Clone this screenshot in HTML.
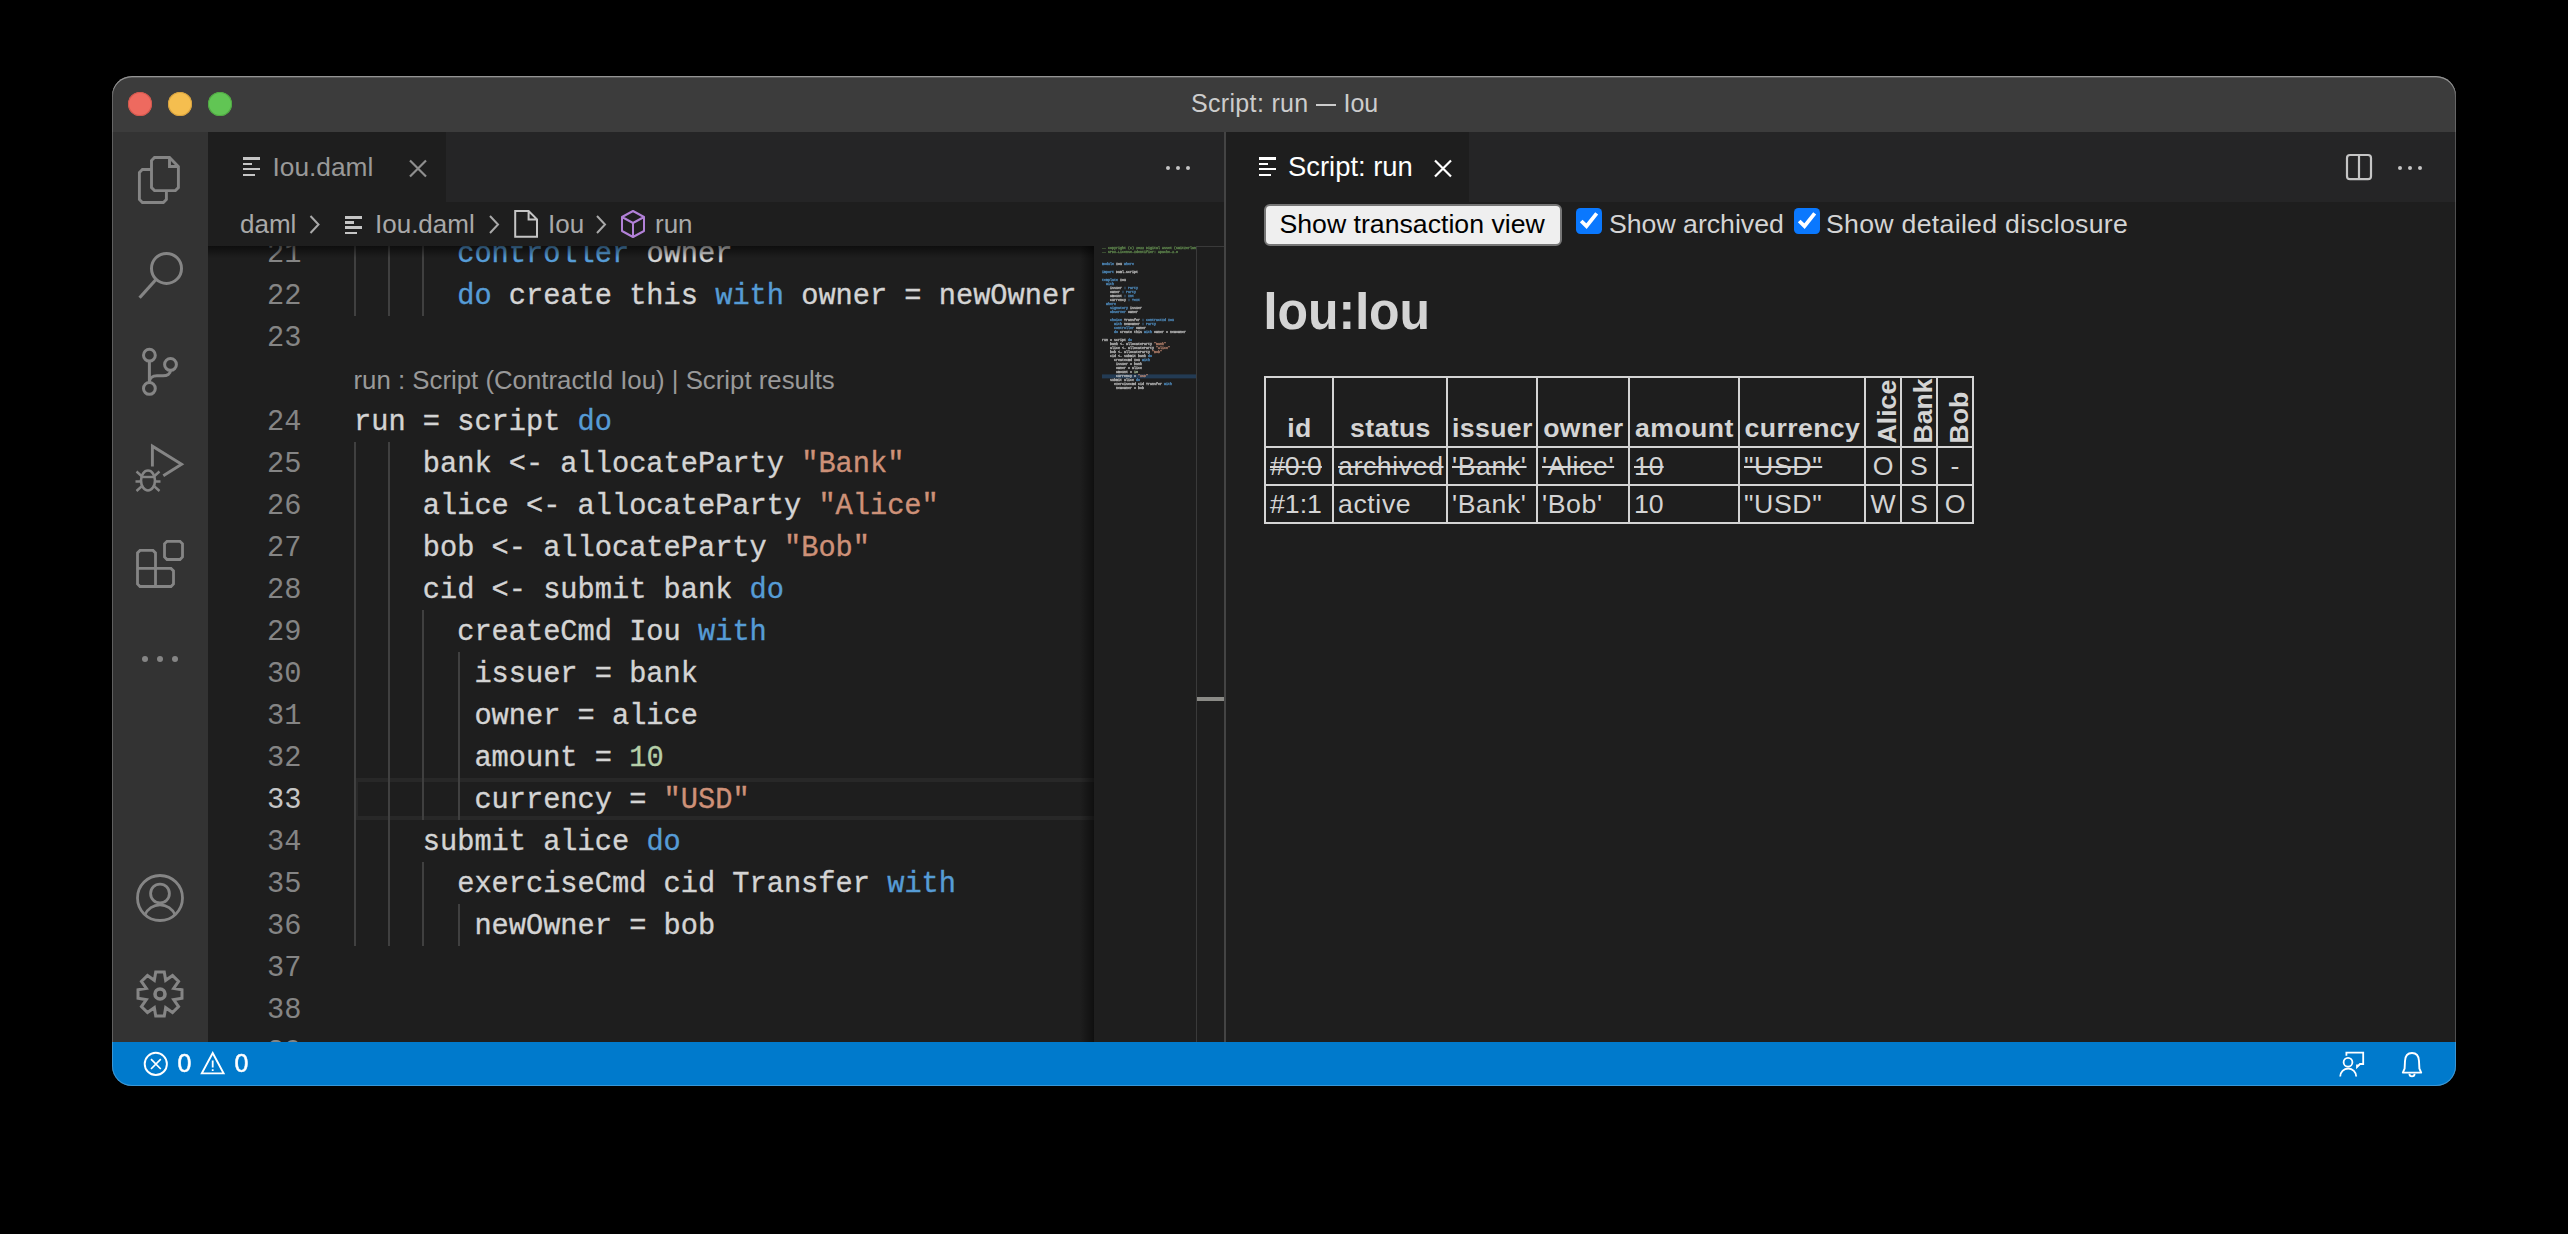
<!DOCTYPE html>
<html><head><meta charset="utf-8"><title>Script: run — Iou</title>
<style>
html,body{margin:0;padding:0;}
body{width:2568px;height:1234px;background:#000;position:relative;overflow:hidden;font-family:"Liberation Sans", sans-serif;}
.a{position:absolute;}
.t{position:absolute;white-space:pre;line-height:1;}
svg{position:absolute;overflow:visible;}
</style></head><body>

<div class="a" style="left:112px;top:76px;width:2344px;height:1010px;border-radius:20px;overflow:hidden;background:#3c3c3c;">
<div class="a" style="left:-112px;top:-76px;width:2568px;height:1234px;">
<div class="a" style="left:112px;top:76px;width:2344px;height:56px;background:#3c3c3c;"></div>
<div class="a" style="left:128px;top:92px;width:24px;height:24px;border-radius:50%;background:#ee6a5f;box-shadow:inset 0 0 0 1px #d2574d;"></div>
<div class="a" style="left:168px;top:92px;width:24px;height:24px;border-radius:50%;background:#f5be4f;box-shadow:inset 0 0 0 1px #d7a13e;"></div>
<div class="a" style="left:208px;top:92px;width:24px;height:24px;border-radius:50%;background:#61c554;box-shadow:inset 0 0 0 1px #50a843;"></div>
<div class="t" style="left:1191px;top:90.74px;font-size:25px;color:#cccccc;font-weight:normal;letter-spacing:0.33px;">Script: run</div>
<div class="a" style="left:1316px;top:104px;width:19.7px;height:2px;background:#cccccc;"></div>
<div class="t" style="left:1343.5px;top:90.74px;font-size:25px;color:#cccccc;font-weight:normal;">Iou</div>
<div class="a" style="left:112px;top:132px;width:96px;height:910px;background:#333333;"></div>
<svg class="a" style="left:0;top:0" width="2568" height="1234" viewBox="0 0 2568 1234" fill="none" stroke="#858585" stroke-width="2.4">
<path d="M154.5 157.5 H169.5 L178.4 166.5 V187.6 L175.4 190.6 H154.5 L151.5 187.6 V160.5 Z" stroke-width="2.9" stroke-linejoin="miter"/>
<path d="M169.5 157.5 V166.5 H178.4" stroke-width="2.9" stroke-linejoin="miter"/>
<path d="M151.5 169.5 H142.4 L139.4 172.5 V199.5 L142.4 202.5 H163.4 L166.4 199.5 V190.6" stroke-width="2.9" stroke-linejoin="miter"/>
<circle cx="166.5" cy="268.4" r="15" stroke-width="3"/>
<path d="M156 279.5 L139.6 297.8" stroke-width="3.2"/>
<circle cx="149.4" cy="355.2" r="5.9" stroke-width="3"/>
<circle cx="170.5" cy="364.4" r="5.9" stroke-width="3"/>
<circle cx="149.4" cy="388.4" r="5.9" stroke-width="3"/>
<path d="M149.4 361.2 V382.6" stroke-width="3"/>
<path d="M170.5 370.2 C170.5 374 167 375.8 163 375.8 H157 C152.5 375.8 149.4 378 149.4 382" stroke-width="3"/>
<path d="M152.4 466.5 V446.2 L181.6 464.3 L163.3 475.8" stroke-width="2.9" stroke-linejoin="miter"/>
<ellipse cx="148" cy="480.5" rx="7" ry="10" stroke-width="2.6"/>
<path d="M141 477 H155" stroke-width="2.4"/>
<path d="M136.5 471.5 L141.5 476 M159.5 471.5 L154.5 476 M135.5 481.5 H140.5 M160.5 481.5 H155.5 M136.5 491 L141.5 486.5 M159.5 491 L154.5 486.5" stroke-width="2.4"/>
<path d="M167 541.3 H180 L182.5 543.8 V557 L180 559.5 H167 L164.5 557 V543.8 Z" stroke-width="2.8"/>
<path d="M140 550.4 H153 L155.5 552.9 V568.4 H171 L173.5 570.9 V584 L171 586.5 H140 L137.5 584 V552.9 Z M137.5 568.4 H155.5 V586.5" stroke-width="2.8"/>
<circle cx="160" cy="898" r="22.5" stroke-width="2.8"/>
<circle cx="160" cy="893.5" r="9.4" stroke-width="2.8"/>
<path d="M144.8 915 A16.5 16.5 0 0 1 175.2 915" stroke-width="2.8"/>

<path d="M155.73 972.01 L164.27 972.01 L165.66 980.33 L172.53 975.43 L178.57 981.47 L173.67 988.34 L181.99 989.73 L181.99 998.27 L173.67 999.66 L178.57 1006.53 L172.53 1012.57 L165.66 1007.67 L164.27 1015.99 L155.73 1015.99 L154.34 1007.67 L147.47 1012.57 L141.43 1006.53 L146.33 999.66 L138.01 998.27 L138.01 989.73 L146.33 988.34 L141.43 981.47 L147.47 975.43 L154.34 980.33 Z" stroke-width="3" stroke-linejoin="miter"/>
<circle cx="160" cy="994" r="5" stroke-width="3.6"/>
</svg>
<div class="a" style="left:142px;top:656px;width:6px;height:6px;border-radius:50%;background:#858585;"></div>
<div class="a" style="left:157px;top:656px;width:6px;height:6px;border-radius:50%;background:#858585;"></div>
<div class="a" style="left:172px;top:656px;width:6px;height:6px;border-radius:50%;background:#858585;"></div>
<div class="a" style="left:208px;top:132px;width:1016px;height:70px;background:#252526;"></div>
<div class="a" style="left:208px;top:132px;width:237.6px;height:70px;background:#1e1e1e;"></div>
<div class="a" style="left:243px;top:157.3px;width:16.6px;height:2.4px;background:#c5c5c5;"></div><div class="a" style="left:243px;top:162.7px;width:9px;height:2.4px;background:#c5c5c5;"></div><div class="a" style="left:243px;top:168.1px;width:16.6px;height:2.4px;background:#c5c5c5;"></div><div class="a" style="left:243px;top:173.5px;width:12px;height:2.4px;background:#c5c5c5;"></div>
<div class="t" style="left:272.5px;top:153.74px;font-size:26.3px;color:#999999;font-weight:normal;">Iou.daml</div>
<svg class="a" style="left:0;top:0" width="2568" height="1234" fill="none">
<path d="M410 160.5 L426 176.5 M426 160.5 L410 176.5" stroke="#8f8f8f" stroke-width="2.2"/>
</svg>
<div class="a" style="left:1165.8px;top:165.8px;width:4.4px;height:4.4px;border-radius:50%;background:#c5c5c5;"></div>
<div class="a" style="left:1175.8px;top:165.8px;width:4.4px;height:4.4px;border-radius:50%;background:#c5c5c5;"></div>
<div class="a" style="left:1185.8px;top:165.8px;width:4.4px;height:4.4px;border-radius:50%;background:#c5c5c5;"></div>
<div class="a" style="left:208px;top:202px;width:1016px;height:44px;background:#1e1e1e;"></div>
<div class="t" style="left:240px;top:211px;font-size:26px;color:#a9a9a9;">daml</div>
<div class="t" style="left:375px;top:211px;font-size:26px;color:#a9a9a9;">Iou.daml</div>
<div class="t" style="left:548px;top:211px;font-size:26px;color:#a9a9a9;">Iou</div>
<div class="t" style="left:655px;top:211px;font-size:26px;color:#a9a9a9;">run</div>
<div class="a" style="left:345px;top:216.2px;width:16.6px;height:2.4px;background:#c5c5c5;"></div><div class="a" style="left:345px;top:221.3px;width:9px;height:2.4px;background:#c5c5c5;"></div><div class="a" style="left:345px;top:226.4px;width:16.6px;height:2.4px;background:#c5c5c5;"></div><div class="a" style="left:345px;top:231.5px;width:12px;height:2.4px;background:#c5c5c5;"></div>
<svg class="a" style="left:0;top:0" width="2568" height="1234" fill="none" stroke="#a9a9a9" stroke-width="2">
<path d="M310.5 216 L318.5 224.5 L310.5 233" />
<path d="M490 216 L498 224.5 L490 233" />
<path d="M597 216 L605 224.5 L597 233" />
<path d="M515.2 211 H528.6 L537 219.4 V236.7 H515.2 Z M528.6 211 V219.4 H537" stroke="#c5c5c5" stroke-linejoin="miter"/>
<path d="M633 211 L644 217 V231 L633 237 L622 231 V217 Z M622 217 L633 223 L644 217 M633 223 V237" stroke="#b180d7" stroke-linejoin="round"/>
</svg>
<div class="a" style="left:208px;top:246px;width:1016px;height:796px;background:#1e1e1e;overflow:hidden;">
<div class="a" style="left:-208px;top:-246px;width:2568px;height:1234px;">
<div class="a" style="left:354px;top:778px;width:736px;height:34px;border:4px solid #282828;border-right:none;"></div>
<div class="a" style="left:354px;top:232px;width:2px;height:42px;background:#404040;"></div>
<div class="a" style="left:388px;top:232px;width:2px;height:42px;background:#404040;"></div>
<div class="a" style="left:422px;top:232px;width:2px;height:42px;background:#404040;"></div>
<div class="a" style="left:354px;top:274px;width:2px;height:42px;background:#404040;"></div>
<div class="a" style="left:388px;top:274px;width:2px;height:42px;background:#404040;"></div>
<div class="a" style="left:422px;top:274px;width:2px;height:42px;background:#404040;"></div>
<div class="a" style="left:354px;top:442px;width:2px;height:42px;background:#404040;"></div>
<div class="a" style="left:388px;top:442px;width:2px;height:42px;background:#404040;"></div>
<div class="a" style="left:354px;top:484px;width:2px;height:42px;background:#404040;"></div>
<div class="a" style="left:388px;top:484px;width:2px;height:42px;background:#404040;"></div>
<div class="a" style="left:354px;top:526px;width:2px;height:42px;background:#404040;"></div>
<div class="a" style="left:388px;top:526px;width:2px;height:42px;background:#404040;"></div>
<div class="a" style="left:354px;top:568px;width:2px;height:42px;background:#404040;"></div>
<div class="a" style="left:388px;top:568px;width:2px;height:42px;background:#404040;"></div>
<div class="a" style="left:354px;top:610px;width:2px;height:42px;background:#404040;"></div>
<div class="a" style="left:388px;top:610px;width:2px;height:42px;background:#404040;"></div>
<div class="a" style="left:422px;top:610px;width:2px;height:42px;background:#404040;"></div>
<div class="a" style="left:354px;top:652px;width:2px;height:42px;background:#404040;"></div>
<div class="a" style="left:388px;top:652px;width:2px;height:42px;background:#404040;"></div>
<div class="a" style="left:422px;top:652px;width:2px;height:42px;background:#404040;"></div>
<div class="a" style="left:458px;top:652px;width:2px;height:42px;background:#404040;"></div>
<div class="a" style="left:354px;top:694px;width:2px;height:42px;background:#404040;"></div>
<div class="a" style="left:388px;top:694px;width:2px;height:42px;background:#404040;"></div>
<div class="a" style="left:422px;top:694px;width:2px;height:42px;background:#404040;"></div>
<div class="a" style="left:458px;top:694px;width:2px;height:42px;background:#404040;"></div>
<div class="a" style="left:354px;top:736px;width:2px;height:42px;background:#404040;"></div>
<div class="a" style="left:388px;top:736px;width:2px;height:42px;background:#404040;"></div>
<div class="a" style="left:422px;top:736px;width:2px;height:42px;background:#404040;"></div>
<div class="a" style="left:458px;top:736px;width:2px;height:42px;background:#404040;"></div>
<div class="a" style="left:354px;top:778px;width:2px;height:42px;background:#404040;"></div>
<div class="a" style="left:388px;top:778px;width:2px;height:42px;background:#404040;"></div>
<div class="a" style="left:422px;top:778px;width:2px;height:42px;background:#404040;"></div>
<div class="a" style="left:458px;top:778px;width:2px;height:42px;background:#404040;"></div>
<div class="a" style="left:354px;top:820px;width:2px;height:42px;background:#404040;"></div>
<div class="a" style="left:388px;top:820px;width:2px;height:42px;background:#404040;"></div>
<div class="a" style="left:354px;top:862px;width:2px;height:42px;background:#404040;"></div>
<div class="a" style="left:388px;top:862px;width:2px;height:42px;background:#404040;"></div>
<div class="a" style="left:422px;top:862px;width:2px;height:42px;background:#404040;"></div>
<div class="a" style="left:354px;top:904px;width:2px;height:42px;background:#404040;"></div>
<div class="a" style="left:388px;top:904px;width:2px;height:42px;background:#404040;"></div>
<div class="a" style="left:422px;top:904px;width:2px;height:42px;background:#404040;"></div>
<div class="a" style="left:458px;top:904px;width:2px;height:42px;background:#404040;"></div>
<div class="t" style="left:201.5px;width:100px;text-align:right;top:241.04px;font-family:'Liberation Mono', monospace;font-size:28.67px;color:#858585;">21</div>
<div class="t" style="left:457.20px;top:241.04px;font-family:'Liberation Mono', monospace;font-size:28.67px;color:#569cd6;-webkit-text-stroke:0.35px #569cd6;">controller</div>
<div class="t" style="left:646.40px;top:241.04px;font-family:'Liberation Mono', monospace;font-size:28.67px;color:#d4d4d4;-webkit-text-stroke:0.35px #d4d4d4;">owner</div>
<div class="t" style="left:201.5px;width:100px;text-align:right;top:283.04px;font-family:'Liberation Mono', monospace;font-size:28.67px;color:#858585;">22</div>
<div class="t" style="left:457.20px;top:283.04px;font-family:'Liberation Mono', monospace;font-size:28.67px;color:#569cd6;-webkit-text-stroke:0.35px #569cd6;">do</div>
<div class="t" style="left:508.80px;top:283.04px;font-family:'Liberation Mono', monospace;font-size:28.67px;color:#d4d4d4;-webkit-text-stroke:0.35px #d4d4d4;">create this</div>
<div class="t" style="left:715.20px;top:283.04px;font-family:'Liberation Mono', monospace;font-size:28.67px;color:#569cd6;-webkit-text-stroke:0.35px #569cd6;">with</div>
<div class="t" style="left:801.20px;top:283.04px;font-family:'Liberation Mono', monospace;font-size:28.67px;color:#d4d4d4;-webkit-text-stroke:0.35px #d4d4d4;">owner = newOwner</div>
<div class="t" style="left:201.5px;width:100px;text-align:right;top:325.04px;font-family:'Liberation Mono', monospace;font-size:28.67px;color:#858585;">23</div>
<div class="t" style="left:201.5px;width:100px;text-align:right;top:409.04px;font-family:'Liberation Mono', monospace;font-size:28.67px;color:#858585;">24</div>
<div class="t" style="left:354.00px;top:409.04px;font-family:'Liberation Mono', monospace;font-size:28.67px;color:#d4d4d4;-webkit-text-stroke:0.35px #d4d4d4;">run = script</div>
<div class="t" style="left:577.60px;top:409.04px;font-family:'Liberation Mono', monospace;font-size:28.67px;color:#569cd6;-webkit-text-stroke:0.35px #569cd6;">do</div>
<div class="t" style="left:201.5px;width:100px;text-align:right;top:451.04px;font-family:'Liberation Mono', monospace;font-size:28.67px;color:#858585;">25</div>
<div class="t" style="left:422.80px;top:451.04px;font-family:'Liberation Mono', monospace;font-size:28.67px;color:#d4d4d4;-webkit-text-stroke:0.35px #d4d4d4;">bank &lt;- allocateParty</div>
<div class="t" style="left:801.20px;top:451.04px;font-family:'Liberation Mono', monospace;font-size:28.67px;color:#ce9178;-webkit-text-stroke:0.35px #ce9178;">"Bank"</div>
<div class="t" style="left:201.5px;width:100px;text-align:right;top:493.04px;font-family:'Liberation Mono', monospace;font-size:28.67px;color:#858585;">26</div>
<div class="t" style="left:422.80px;top:493.04px;font-family:'Liberation Mono', monospace;font-size:28.67px;color:#d4d4d4;-webkit-text-stroke:0.35px #d4d4d4;">alice &lt;- allocateParty</div>
<div class="t" style="left:818.40px;top:493.04px;font-family:'Liberation Mono', monospace;font-size:28.67px;color:#ce9178;-webkit-text-stroke:0.35px #ce9178;">"Alice"</div>
<div class="t" style="left:201.5px;width:100px;text-align:right;top:535.04px;font-family:'Liberation Mono', monospace;font-size:28.67px;color:#858585;">27</div>
<div class="t" style="left:422.80px;top:535.04px;font-family:'Liberation Mono', monospace;font-size:28.67px;color:#d4d4d4;-webkit-text-stroke:0.35px #d4d4d4;">bob &lt;- allocateParty</div>
<div class="t" style="left:784.00px;top:535.04px;font-family:'Liberation Mono', monospace;font-size:28.67px;color:#ce9178;-webkit-text-stroke:0.35px #ce9178;">"Bob"</div>
<div class="t" style="left:201.5px;width:100px;text-align:right;top:577.04px;font-family:'Liberation Mono', monospace;font-size:28.67px;color:#858585;">28</div>
<div class="t" style="left:422.80px;top:577.04px;font-family:'Liberation Mono', monospace;font-size:28.67px;color:#d4d4d4;-webkit-text-stroke:0.35px #d4d4d4;">cid &lt;- submit bank</div>
<div class="t" style="left:749.60px;top:577.04px;font-family:'Liberation Mono', monospace;font-size:28.67px;color:#569cd6;-webkit-text-stroke:0.35px #569cd6;">do</div>
<div class="t" style="left:201.5px;width:100px;text-align:right;top:619.04px;font-family:'Liberation Mono', monospace;font-size:28.67px;color:#858585;">29</div>
<div class="t" style="left:457.20px;top:619.04px;font-family:'Liberation Mono', monospace;font-size:28.67px;color:#d4d4d4;-webkit-text-stroke:0.35px #d4d4d4;">createCmd Iou</div>
<div class="t" style="left:698.00px;top:619.04px;font-family:'Liberation Mono', monospace;font-size:28.67px;color:#569cd6;-webkit-text-stroke:0.35px #569cd6;">with</div>
<div class="t" style="left:201.5px;width:100px;text-align:right;top:661.04px;font-family:'Liberation Mono', monospace;font-size:28.67px;color:#858585;">30</div>
<div class="t" style="left:474.40px;top:661.04px;font-family:'Liberation Mono', monospace;font-size:28.67px;color:#d4d4d4;-webkit-text-stroke:0.35px #d4d4d4;">issuer = bank</div>
<div class="t" style="left:201.5px;width:100px;text-align:right;top:703.04px;font-family:'Liberation Mono', monospace;font-size:28.67px;color:#858585;">31</div>
<div class="t" style="left:474.40px;top:703.04px;font-family:'Liberation Mono', monospace;font-size:28.67px;color:#d4d4d4;-webkit-text-stroke:0.35px #d4d4d4;">owner = alice</div>
<div class="t" style="left:201.5px;width:100px;text-align:right;top:745.04px;font-family:'Liberation Mono', monospace;font-size:28.67px;color:#858585;">32</div>
<div class="t" style="left:474.40px;top:745.04px;font-family:'Liberation Mono', monospace;font-size:28.67px;color:#d4d4d4;-webkit-text-stroke:0.35px #d4d4d4;">amount =</div>
<div class="t" style="left:629.20px;top:745.04px;font-family:'Liberation Mono', monospace;font-size:28.67px;color:#b5cea8;-webkit-text-stroke:0.35px #b5cea8;">10</div>
<div class="t" style="left:201.5px;width:100px;text-align:right;top:787.04px;font-family:'Liberation Mono', monospace;font-size:28.67px;color:#c6c6c6;">33</div>
<div class="t" style="left:474.40px;top:787.04px;font-family:'Liberation Mono', monospace;font-size:28.67px;color:#d4d4d4;-webkit-text-stroke:0.35px #d4d4d4;">currency =</div>
<div class="t" style="left:663.60px;top:787.04px;font-family:'Liberation Mono', monospace;font-size:28.67px;color:#ce9178;-webkit-text-stroke:0.35px #ce9178;">"USD"</div>
<div class="t" style="left:201.5px;width:100px;text-align:right;top:829.04px;font-family:'Liberation Mono', monospace;font-size:28.67px;color:#858585;">34</div>
<div class="t" style="left:422.80px;top:829.04px;font-family:'Liberation Mono', monospace;font-size:28.67px;color:#d4d4d4;-webkit-text-stroke:0.35px #d4d4d4;">submit alice</div>
<div class="t" style="left:646.40px;top:829.04px;font-family:'Liberation Mono', monospace;font-size:28.67px;color:#569cd6;-webkit-text-stroke:0.35px #569cd6;">do</div>
<div class="t" style="left:201.5px;width:100px;text-align:right;top:871.04px;font-family:'Liberation Mono', monospace;font-size:28.67px;color:#858585;">35</div>
<div class="t" style="left:457.20px;top:871.04px;font-family:'Liberation Mono', monospace;font-size:28.67px;color:#d4d4d4;-webkit-text-stroke:0.35px #d4d4d4;">exerciseCmd cid Transfer</div>
<div class="t" style="left:887.20px;top:871.04px;font-family:'Liberation Mono', monospace;font-size:28.67px;color:#569cd6;-webkit-text-stroke:0.35px #569cd6;">with</div>
<div class="t" style="left:201.5px;width:100px;text-align:right;top:913.04px;font-family:'Liberation Mono', monospace;font-size:28.67px;color:#858585;">36</div>
<div class="t" style="left:474.40px;top:913.04px;font-family:'Liberation Mono', monospace;font-size:28.67px;color:#d4d4d4;-webkit-text-stroke:0.35px #d4d4d4;">newOwner = bob</div>
<div class="t" style="left:201.5px;width:100px;text-align:right;top:955.04px;font-family:'Liberation Mono', monospace;font-size:28.67px;color:#858585;">37</div>
<div class="t" style="left:201.5px;width:100px;text-align:right;top:997.04px;font-family:'Liberation Mono', monospace;font-size:28.67px;color:#858585;">38</div>
<div class="t" style="left:201.5px;width:100px;text-align:right;top:1039.04px;font-family:'Liberation Mono', monospace;font-size:28.67px;color:#858585;">39</div>
<div class="t" style="left:353.5px;top:367.66px;font-size:25.8px;color:#999999;">run : Script (ContractId Iou) | Script results</div>
<div class="a" style="left:208px;top:246px;width:886px;height:12px;background:linear-gradient(rgba(0,0,0,0.55),rgba(0,0,0,0));"></div>
<div class="a" style="left:1080px;top:246px;width:14px;height:796px;background:linear-gradient(90deg,rgba(0,0,0,0),rgba(0,0,0,0.5));"></div>
</div></div>
<svg class="a" style="left:0;top:0" width="2568" height="1234">
<rect x="1102" y="374.4" width="94" height="4" fill="#264f78" opacity="0.6"/>
</svg>
<div class="a" style="left:1102px;top:246.4px;width:94px;height:160px;overflow:hidden;">
<div class="a" style="left:0;top:0;width:1000px;transform:scale(0.1);transform-origin:0 0;">
<div class="t" style="left:0px;top:-1px;font-family:'Liberation Mono', monospace;font-size:33.3px;line-height:40px;color:#6a9955;opacity:0.8;-webkit-text-stroke:3px #6a9955;">-- Copyright (c) 2022 Digital Asset (Switzerland) GmbH and/or its affiliates.</div>
<div class="t" style="left:0px;top:39px;font-family:'Liberation Mono', monospace;font-size:33.3px;line-height:40px;color:#6a9955;opacity:0.8;-webkit-text-stroke:3px #6a9955;">-- SPDX-License-Identifier: Apache-2.0</div>
<div class="t" style="left:0px;top:159px;font-family:'Liberation Mono', monospace;font-size:33.3px;line-height:40px;color:#569cd6;opacity:0.8;-webkit-text-stroke:3px #569cd6;">module</div>
<div class="t" style="left:140px;top:159px;font-family:'Liberation Mono', monospace;font-size:33.3px;line-height:40px;color:#d4d4d4;opacity:0.8;-webkit-text-stroke:3px #d4d4d4;">Iou</div>
<div class="t" style="left:220px;top:159px;font-family:'Liberation Mono', monospace;font-size:33.3px;line-height:40px;color:#569cd6;opacity:0.8;-webkit-text-stroke:3px #569cd6;">where</div>
<div class="t" style="left:0px;top:239px;font-family:'Liberation Mono', monospace;font-size:33.3px;line-height:40px;color:#569cd6;opacity:0.8;-webkit-text-stroke:3px #569cd6;">import</div>
<div class="t" style="left:140px;top:239px;font-family:'Liberation Mono', monospace;font-size:33.3px;line-height:40px;color:#d4d4d4;opacity:0.8;-webkit-text-stroke:3px #d4d4d4;">Daml.Script</div>
<div class="t" style="left:0px;top:319px;font-family:'Liberation Mono', monospace;font-size:33.3px;line-height:40px;color:#569cd6;opacity:0.8;-webkit-text-stroke:3px #569cd6;">template</div>
<div class="t" style="left:180px;top:319px;font-family:'Liberation Mono', monospace;font-size:33.3px;line-height:40px;color:#d4d4d4;opacity:0.8;-webkit-text-stroke:3px #d4d4d4;">Iou</div>
<div class="t" style="left:40px;top:359px;font-family:'Liberation Mono', monospace;font-size:33.3px;line-height:40px;color:#569cd6;opacity:0.8;-webkit-text-stroke:3px #569cd6;">with</div>
<div class="t" style="left:80px;top:399px;font-family:'Liberation Mono', monospace;font-size:33.3px;line-height:40px;color:#d4d4d4;opacity:0.8;-webkit-text-stroke:3px #d4d4d4;">issuer</div>
<div class="t" style="left:220px;top:399px;font-family:'Liberation Mono', monospace;font-size:33.3px;line-height:40px;color:#569cd6;opacity:0.8;-webkit-text-stroke:3px #569cd6;">: Party</div>
<div class="t" style="left:80px;top:439px;font-family:'Liberation Mono', monospace;font-size:33.3px;line-height:40px;color:#d4d4d4;opacity:0.8;-webkit-text-stroke:3px #d4d4d4;">owner</div>
<div class="t" style="left:200px;top:439px;font-family:'Liberation Mono', monospace;font-size:33.3px;line-height:40px;color:#569cd6;opacity:0.8;-webkit-text-stroke:3px #569cd6;">: Party</div>
<div class="t" style="left:80px;top:479px;font-family:'Liberation Mono', monospace;font-size:33.3px;line-height:40px;color:#d4d4d4;opacity:0.8;-webkit-text-stroke:3px #d4d4d4;">amount</div>
<div class="t" style="left:220px;top:479px;font-family:'Liberation Mono', monospace;font-size:33.3px;line-height:40px;color:#569cd6;opacity:0.8;-webkit-text-stroke:3px #569cd6;">: Int</div>
<div class="t" style="left:80px;top:519px;font-family:'Liberation Mono', monospace;font-size:33.3px;line-height:40px;color:#d4d4d4;opacity:0.8;-webkit-text-stroke:3px #d4d4d4;">currency</div>
<div class="t" style="left:260px;top:519px;font-family:'Liberation Mono', monospace;font-size:33.3px;line-height:40px;color:#569cd6;opacity:0.8;-webkit-text-stroke:3px #569cd6;">: Text</div>
<div class="t" style="left:40px;top:559px;font-family:'Liberation Mono', monospace;font-size:33.3px;line-height:40px;color:#569cd6;opacity:0.8;-webkit-text-stroke:3px #569cd6;">where</div>
<div class="t" style="left:80px;top:599px;font-family:'Liberation Mono', monospace;font-size:33.3px;line-height:40px;color:#569cd6;opacity:0.8;-webkit-text-stroke:3px #569cd6;">signatory</div>
<div class="t" style="left:280px;top:599px;font-family:'Liberation Mono', monospace;font-size:33.3px;line-height:40px;color:#d4d4d4;opacity:0.8;-webkit-text-stroke:3px #d4d4d4;">issuer</div>
<div class="t" style="left:80px;top:639px;font-family:'Liberation Mono', monospace;font-size:33.3px;line-height:40px;color:#569cd6;opacity:0.8;-webkit-text-stroke:3px #569cd6;">observer</div>
<div class="t" style="left:260px;top:639px;font-family:'Liberation Mono', monospace;font-size:33.3px;line-height:40px;color:#d4d4d4;opacity:0.8;-webkit-text-stroke:3px #d4d4d4;">owner</div>
<div class="t" style="left:80px;top:719px;font-family:'Liberation Mono', monospace;font-size:33.3px;line-height:40px;color:#569cd6;opacity:0.8;-webkit-text-stroke:3px #569cd6;">choice</div>
<div class="t" style="left:220px;top:719px;font-family:'Liberation Mono', monospace;font-size:33.3px;line-height:40px;color:#d4d4d4;opacity:0.8;-webkit-text-stroke:3px #d4d4d4;">Transfer</div>
<div class="t" style="left:400px;top:719px;font-family:'Liberation Mono', monospace;font-size:33.3px;line-height:40px;color:#569cd6;opacity:0.8;-webkit-text-stroke:3px #569cd6;">: ContractId Iou</div>
<div class="t" style="left:120px;top:759px;font-family:'Liberation Mono', monospace;font-size:33.3px;line-height:40px;color:#569cd6;opacity:0.8;-webkit-text-stroke:3px #569cd6;">with</div>
<div class="t" style="left:220px;top:759px;font-family:'Liberation Mono', monospace;font-size:33.3px;line-height:40px;color:#d4d4d4;opacity:0.8;-webkit-text-stroke:3px #d4d4d4;">newOwner</div>
<div class="t" style="left:400px;top:759px;font-family:'Liberation Mono', monospace;font-size:33.3px;line-height:40px;color:#569cd6;opacity:0.8;-webkit-text-stroke:3px #569cd6;">: Party</div>
<div class="t" style="left:120px;top:799px;font-family:'Liberation Mono', monospace;font-size:33.3px;line-height:40px;color:#569cd6;opacity:0.8;-webkit-text-stroke:3px #569cd6;">controller</div>
<div class="t" style="left:340px;top:799px;font-family:'Liberation Mono', monospace;font-size:33.3px;line-height:40px;color:#d4d4d4;opacity:0.8;-webkit-text-stroke:3px #d4d4d4;">owner</div>
<div class="t" style="left:120px;top:839px;font-family:'Liberation Mono', monospace;font-size:33.3px;line-height:40px;color:#569cd6;opacity:0.8;-webkit-text-stroke:3px #569cd6;">do</div>
<div class="t" style="left:180px;top:839px;font-family:'Liberation Mono', monospace;font-size:33.3px;line-height:40px;color:#d4d4d4;opacity:0.8;-webkit-text-stroke:3px #d4d4d4;">create this</div>
<div class="t" style="left:420px;top:839px;font-family:'Liberation Mono', monospace;font-size:33.3px;line-height:40px;color:#569cd6;opacity:0.8;-webkit-text-stroke:3px #569cd6;">with</div>
<div class="t" style="left:520px;top:839px;font-family:'Liberation Mono', monospace;font-size:33.3px;line-height:40px;color:#d4d4d4;opacity:0.8;-webkit-text-stroke:3px #d4d4d4;">owner = newOwner</div>
<div class="t" style="left:0px;top:919px;font-family:'Liberation Mono', monospace;font-size:33.3px;line-height:40px;color:#d4d4d4;opacity:0.8;-webkit-text-stroke:3px #d4d4d4;">run = script</div>
<div class="t" style="left:260px;top:919px;font-family:'Liberation Mono', monospace;font-size:33.3px;line-height:40px;color:#569cd6;opacity:0.8;-webkit-text-stroke:3px #569cd6;">do</div>
<div class="t" style="left:80px;top:959px;font-family:'Liberation Mono', monospace;font-size:33.3px;line-height:40px;color:#d4d4d4;opacity:0.8;-webkit-text-stroke:3px #d4d4d4;">bank &lt;- allocateParty</div>
<div class="t" style="left:520px;top:959px;font-family:'Liberation Mono', monospace;font-size:33.3px;line-height:40px;color:#ce9178;opacity:0.8;-webkit-text-stroke:3px #ce9178;">"Bank"</div>
<div class="t" style="left:80px;top:999px;font-family:'Liberation Mono', monospace;font-size:33.3px;line-height:40px;color:#d4d4d4;opacity:0.8;-webkit-text-stroke:3px #d4d4d4;">alice &lt;- allocateParty</div>
<div class="t" style="left:540px;top:999px;font-family:'Liberation Mono', monospace;font-size:33.3px;line-height:40px;color:#ce9178;opacity:0.8;-webkit-text-stroke:3px #ce9178;">"Alice"</div>
<div class="t" style="left:80px;top:1039px;font-family:'Liberation Mono', monospace;font-size:33.3px;line-height:40px;color:#d4d4d4;opacity:0.8;-webkit-text-stroke:3px #d4d4d4;">bob &lt;- allocateParty</div>
<div class="t" style="left:500px;top:1039px;font-family:'Liberation Mono', monospace;font-size:33.3px;line-height:40px;color:#ce9178;opacity:0.8;-webkit-text-stroke:3px #ce9178;">"Bob"</div>
<div class="t" style="left:80px;top:1079px;font-family:'Liberation Mono', monospace;font-size:33.3px;line-height:40px;color:#d4d4d4;opacity:0.8;-webkit-text-stroke:3px #d4d4d4;">cid &lt;- submit bank</div>
<div class="t" style="left:460px;top:1079px;font-family:'Liberation Mono', monospace;font-size:33.3px;line-height:40px;color:#569cd6;opacity:0.8;-webkit-text-stroke:3px #569cd6;">do</div>
<div class="t" style="left:120px;top:1119px;font-family:'Liberation Mono', monospace;font-size:33.3px;line-height:40px;color:#d4d4d4;opacity:0.8;-webkit-text-stroke:3px #d4d4d4;">createCmd Iou</div>
<div class="t" style="left:400px;top:1119px;font-family:'Liberation Mono', monospace;font-size:33.3px;line-height:40px;color:#569cd6;opacity:0.8;-webkit-text-stroke:3px #569cd6;">with</div>
<div class="t" style="left:140px;top:1159px;font-family:'Liberation Mono', monospace;font-size:33.3px;line-height:40px;color:#d4d4d4;opacity:0.8;-webkit-text-stroke:3px #d4d4d4;">issuer = bank</div>
<div class="t" style="left:140px;top:1199px;font-family:'Liberation Mono', monospace;font-size:33.3px;line-height:40px;color:#d4d4d4;opacity:0.8;-webkit-text-stroke:3px #d4d4d4;">owner = alice</div>
<div class="t" style="left:140px;top:1239px;font-family:'Liberation Mono', monospace;font-size:33.3px;line-height:40px;color:#d4d4d4;opacity:0.8;-webkit-text-stroke:3px #d4d4d4;">amount =</div>
<div class="t" style="left:320px;top:1239px;font-family:'Liberation Mono', monospace;font-size:33.3px;line-height:40px;color:#b5cea8;opacity:0.8;-webkit-text-stroke:3px #b5cea8;">10</div>
<div class="t" style="left:140px;top:1279px;font-family:'Liberation Mono', monospace;font-size:33.3px;line-height:40px;color:#d4d4d4;opacity:0.8;-webkit-text-stroke:3px #d4d4d4;">currency =</div>
<div class="t" style="left:360px;top:1279px;font-family:'Liberation Mono', monospace;font-size:33.3px;line-height:40px;color:#ce9178;opacity:0.8;-webkit-text-stroke:3px #ce9178;">"USD"</div>
<div class="t" style="left:80px;top:1319px;font-family:'Liberation Mono', monospace;font-size:33.3px;line-height:40px;color:#d4d4d4;opacity:0.8;-webkit-text-stroke:3px #d4d4d4;">submit alice</div>
<div class="t" style="left:340px;top:1319px;font-family:'Liberation Mono', monospace;font-size:33.3px;line-height:40px;color:#569cd6;opacity:0.8;-webkit-text-stroke:3px #569cd6;">do</div>
<div class="t" style="left:120px;top:1359px;font-family:'Liberation Mono', monospace;font-size:33.3px;line-height:40px;color:#d4d4d4;opacity:0.8;-webkit-text-stroke:3px #d4d4d4;">exerciseCmd cid Transfer</div>
<div class="t" style="left:620px;top:1359px;font-family:'Liberation Mono', monospace;font-size:33.3px;line-height:40px;color:#569cd6;opacity:0.8;-webkit-text-stroke:3px #569cd6;">with</div>
<div class="t" style="left:140px;top:1399px;font-family:'Liberation Mono', monospace;font-size:33.3px;line-height:40px;color:#d4d4d4;opacity:0.8;-webkit-text-stroke:3px #d4d4d4;">newOwner = bob</div>
</div></div>
<div class="a" style="left:1196px;top:246px;width:1px;height:796px;background:#3a3a3a;"></div>
<div class="a" style="left:1196px;top:246px;width:28px;height:1px;background:#3a3a3a;"></div>
<div class="a" style="left:1197px;top:697px;width:27px;height:4px;background:#8a8a86;"></div>
<div class="a" style="left:1224px;top:132px;width:2px;height:910px;background:#444444;"></div>
<div class="a" style="left:1226px;top:132px;width:1230px;height:70px;background:#252526;"></div>
<div class="a" style="left:1226px;top:132px;width:243px;height:70px;background:#1e1e1e;"></div>
<div class="a" style="left:1259px;top:157.3px;width:16.6px;height:2.4px;background:#ffffff;"></div><div class="a" style="left:1259px;top:162.7px;width:9px;height:2.4px;background:#ffffff;"></div><div class="a" style="left:1259px;top:168.1px;width:16.6px;height:2.4px;background:#ffffff;"></div><div class="a" style="left:1259px;top:173.5px;width:12px;height:2.4px;background:#ffffff;"></div>
<div class="t" style="left:1288px;top:152.81px;font-size:27.4px;color:#ffffff;font-weight:normal;">Script: run</div>
<svg class="a" style="left:0;top:0" width="2568" height="1234" fill="none">
<path d="M1435 160.5 L1451 176.5 M1451 160.5 L1435 176.5" stroke="#ffffff" stroke-width="2.2"/>
<rect x="2347" y="155" width="24" height="24.2" rx="3" stroke="#c5c5c5" stroke-width="2.2"/>
<path d="M2359 155 V179" stroke="#c5c5c5" stroke-width="2.2"/>
</svg>
<div class="a" style="left:2397.8px;top:165.8px;width:4.4px;height:4.4px;border-radius:50%;background:#c5c5c5;"></div>
<div class="a" style="left:2407.8px;top:165.8px;width:4.4px;height:4.4px;border-radius:50%;background:#c5c5c5;"></div>
<div class="a" style="left:2417.8px;top:165.8px;width:4.4px;height:4.4px;border-radius:50%;background:#c5c5c5;"></div>
<div class="a" style="left:1226px;top:202px;width:1230px;height:840px;background:#1e1e1e;"></div>
<div class="a" style="left:1264px;top:204px;width:294px;height:38px;background:#efefef;border:2px solid #767676;border-radius:6px;"></div>
<div class="t" style="left:1279.5px;top:211.42px;font-size:26.67px;color:#000000;font-weight:normal;">Show transaction view</div>
<div class="a" style="left:1576px;top:208px;width:26px;height:26px;background:#0a78fe;border-radius:4.5px;"></div><svg class="a" style="left:0;top:0" width="2568" height="1234" fill="none"><path d="M1581.2 221 L1586.5 226.2 L1596.7 213.4" stroke="#fff" stroke-width="3.8" stroke-linecap="butt" stroke-linejoin="miter"/></svg>
<div class="t" style="left:1609px;top:211.12px;font-size:26.67px;color:#d4d4d4;font-weight:normal;">Show archived</div>
<div class="a" style="left:1794px;top:208px;width:26px;height:26px;background:#0a78fe;border-radius:4.5px;"></div><svg class="a" style="left:0;top:0" width="2568" height="1234" fill="none"><path d="M1799.2 221 L1804.5 226.2 L1814.7 213.4" stroke="#fff" stroke-width="3.8" stroke-linecap="butt" stroke-linejoin="miter"/></svg>
<div class="t" style="left:1826px;top:211.12px;font-size:26.67px;color:#d4d4d4;font-weight:normal;letter-spacing:0.3px;">Show detailed disclosure</div>
<div class="t" style="left:1263.5px;top:287.18px;font-size:50px;color:#d4d4d4;font-weight:bold;transform:scaleY(1.075);transform-origin:0 42.3px;">Iou:Iou</div>
<div class="a" style="left:1264px;top:376px;width:2px;height:148px;background:#d4d4d4;"></div>
<div class="a" style="left:1332px;top:376px;width:2px;height:148px;background:#d4d4d4;"></div>
<div class="a" style="left:1446px;top:376px;width:2px;height:148px;background:#d4d4d4;"></div>
<div class="a" style="left:1536px;top:376px;width:2px;height:148px;background:#d4d4d4;"></div>
<div class="a" style="left:1628px;top:376px;width:2px;height:148px;background:#d4d4d4;"></div>
<div class="a" style="left:1738px;top:376px;width:2px;height:148px;background:#d4d4d4;"></div>
<div class="a" style="left:1864px;top:376px;width:2px;height:148px;background:#d4d4d4;"></div>
<div class="a" style="left:1900px;top:376px;width:2px;height:148px;background:#d4d4d4;"></div>
<div class="a" style="left:1936px;top:376px;width:2px;height:148px;background:#d4d4d4;"></div>
<div class="a" style="left:1972px;top:376px;width:2px;height:148px;background:#d4d4d4;"></div>
<div class="a" style="left:1264px;top:376px;width:710px;height:2px;background:#d4d4d4;"></div>
<div class="a" style="left:1264px;top:446px;width:710px;height:2px;background:#d4d4d4;"></div>
<div class="a" style="left:1264px;top:484px;width:710px;height:2px;background:#d4d4d4;"></div>
<div class="a" style="left:1264px;top:522px;width:710px;height:2px;background:#d4d4d4;"></div>
<div class="t" style="left:1266.4px;width:66px;text-align:center;top:414.92px;font-size:26.67px;font-weight:bold;color:#d4d4d4;letter-spacing:0.4px;">id</div>
<div class="t" style="left:1334.4px;width:112px;text-align:center;top:414.92px;font-size:26.67px;font-weight:bold;color:#d4d4d4;letter-spacing:0.4px;">status</div>
<div class="t" style="left:1448.4px;width:88px;text-align:center;top:414.92px;font-size:26.67px;font-weight:bold;color:#d4d4d4;letter-spacing:0.4px;">issuer</div>
<div class="t" style="left:1538.4px;width:90px;text-align:center;top:414.92px;font-size:26.67px;font-weight:bold;color:#d4d4d4;letter-spacing:0.4px;">owner</div>
<div class="t" style="left:1630.4px;width:108px;text-align:center;top:414.92px;font-size:26.67px;font-weight:bold;color:#d4d4d4;letter-spacing:0.4px;">amount</div>
<div class="t" style="left:1740.4px;width:124px;text-align:center;top:414.92px;font-size:26.67px;font-weight:bold;color:#d4d4d4;letter-spacing:0.4px;">currency</div>
<svg class="a" style="left:0;top:0" width="2568" height="1234">
<text x="0" y="0" transform="translate(1896.0,443.5) rotate(-90)" font-family="Liberation Sans" font-weight="bold" font-size="26.67" fill="#d4d4d4">Alice</text>
<text x="0" y="0" transform="translate(1932.0,443.5) rotate(-90)" font-family="Liberation Sans" font-weight="bold" font-size="26.67" fill="#d4d4d4">Bank</text>
<text x="0" y="0" transform="translate(1968.0,443.5) rotate(-90)" font-family="Liberation Sans" font-weight="bold" font-size="26.67" fill="#d4d4d4">Bob</text>
</svg>
<div class="t" style="left:1270px;top:453.42px;font-size:26.67px;color:#d4d4d4;font-weight:normal;text-decoration:line-through;">#0:0</div>
<div class="t" style="left:1338px;top:453.42px;font-size:26.67px;color:#d4d4d4;font-weight:normal;text-decoration:line-through;letter-spacing:0.6px;">archived</div>
<div class="t" style="left:1452px;top:453.42px;font-size:26.67px;color:#d4d4d4;font-weight:normal;text-decoration:line-through;letter-spacing:0.6px;">'Bank'</div>
<div class="t" style="left:1542px;top:453.42px;font-size:26.67px;color:#d4d4d4;font-weight:normal;text-decoration:line-through;letter-spacing:0.6px;">'Alice'</div>
<div class="t" style="left:1634px;top:453.42px;font-size:26.67px;color:#d4d4d4;font-weight:normal;text-decoration:line-through;">10</div>
<div class="t" style="left:1744px;top:453.42px;font-size:26.67px;color:#d4d4d4;font-weight:normal;text-decoration:line-through;letter-spacing:0.6px;">&quot;USD&quot;</div>
<div class="t" style="left:1270px;top:491.02px;font-size:26.67px;color:#d4d4d4;font-weight:normal;">#1:1</div>
<div class="t" style="left:1338px;top:491.02px;font-size:26.67px;color:#d4d4d4;font-weight:normal;letter-spacing:0.6px;">active</div>
<div class="t" style="left:1452px;top:491.02px;font-size:26.67px;color:#d4d4d4;font-weight:normal;letter-spacing:0.6px;">'Bank'</div>
<div class="t" style="left:1542px;top:491.02px;font-size:26.67px;color:#d4d4d4;font-weight:normal;letter-spacing:0.6px;">'Bob'</div>
<div class="t" style="left:1634px;top:491.02px;font-size:26.67px;color:#d4d4d4;font-weight:normal;">10</div>
<div class="t" style="left:1744px;top:491.02px;font-size:26.67px;color:#d4d4d4;font-weight:normal;letter-spacing:0.6px;">&quot;USD&quot;</div>
<div class="t" style="left:1866px;width:34px;text-align:center;top:453.42px;font-size:26.67px;color:#d4d4d4;">O</div>
<div class="t" style="left:1902px;width:34px;text-align:center;top:453.42px;font-size:26.67px;color:#d4d4d4;">S</div>
<div class="t" style="left:1938px;width:34px;text-align:center;top:453.42px;font-size:26.67px;color:#d4d4d4;">-</div>
<div class="t" style="left:1866px;width:34px;text-align:center;top:491.02px;font-size:26.67px;color:#d4d4d4;">W</div>
<div class="t" style="left:1902px;width:34px;text-align:center;top:491.02px;font-size:26.67px;color:#d4d4d4;">S</div>
<div class="t" style="left:1938px;width:34px;text-align:center;top:491.02px;font-size:26.67px;color:#d4d4d4;">O</div>
<div class="a" style="left:112px;top:1042px;width:2344px;height:44px;background:#007acc;"></div>
<svg class="a" style="left:0;top:0" width="2568" height="1234" fill="none" stroke="#ffffff">
<circle cx="155.8" cy="1063.9" r="11.1" stroke-width="1.9"/>
<path d="M151 1059.2 L160.8 1069 M160.8 1059.2 L151 1069" stroke-width="1.7"/>
<path d="M212.7 1053 L223.6 1073.4 H201.8 Z" stroke-width="1.9" stroke-linejoin="miter"/>
<path d="M212.7 1060.4 V1067.6 M212.7 1069.2 V1071" stroke-width="1.8"/>
<circle cx="2348" cy="1062.3" r="4.4" stroke-width="1.8"/>
<path d="M2340.2 1076.5 A8 8 0 0 1 2356.2 1076.5" stroke-width="1.8"/>
<path d="M2346.4 1055.7 V1052.7 H2363.2 V1064 H2360 L2357 1067 V1064.6" stroke-width="1.8"/>
<path d="M2402.8 1072.6 L2404.6 1068.6 L2405 1061 Q2405.4 1053 2412 1053 Q2418.6 1053 2419 1061 L2419.4 1068.6 L2421.2 1072.6 Z" stroke-width="1.9" stroke-linejoin="round"/>
<path d="M2409.4 1073.8 A2.6 2.6 0 0 0 2414.6 1073.8" stroke-width="1.8"/>
</svg>
<div class="t" style="left:177.5px;top:1051.34px;font-size:25px;color:#ffffff;font-weight:normal;-webkit-text-stroke:0.5px #fff;">0</div>
<div class="t" style="left:234.5px;top:1051.34px;font-size:25px;color:#ffffff;font-weight:normal;-webkit-text-stroke:0.5px #fff;">0</div>
</div>
</div>
<div class="a" style="left:112px;top:76px;width:2344px;height:1010px;border-radius:20px;box-shadow:inset 0 0 0 1px rgba(255,255,255,0.22), inset 0 1.5px 0 rgba(255,255,255,0.3);pointer-events:none;"></div>
</body></html>
